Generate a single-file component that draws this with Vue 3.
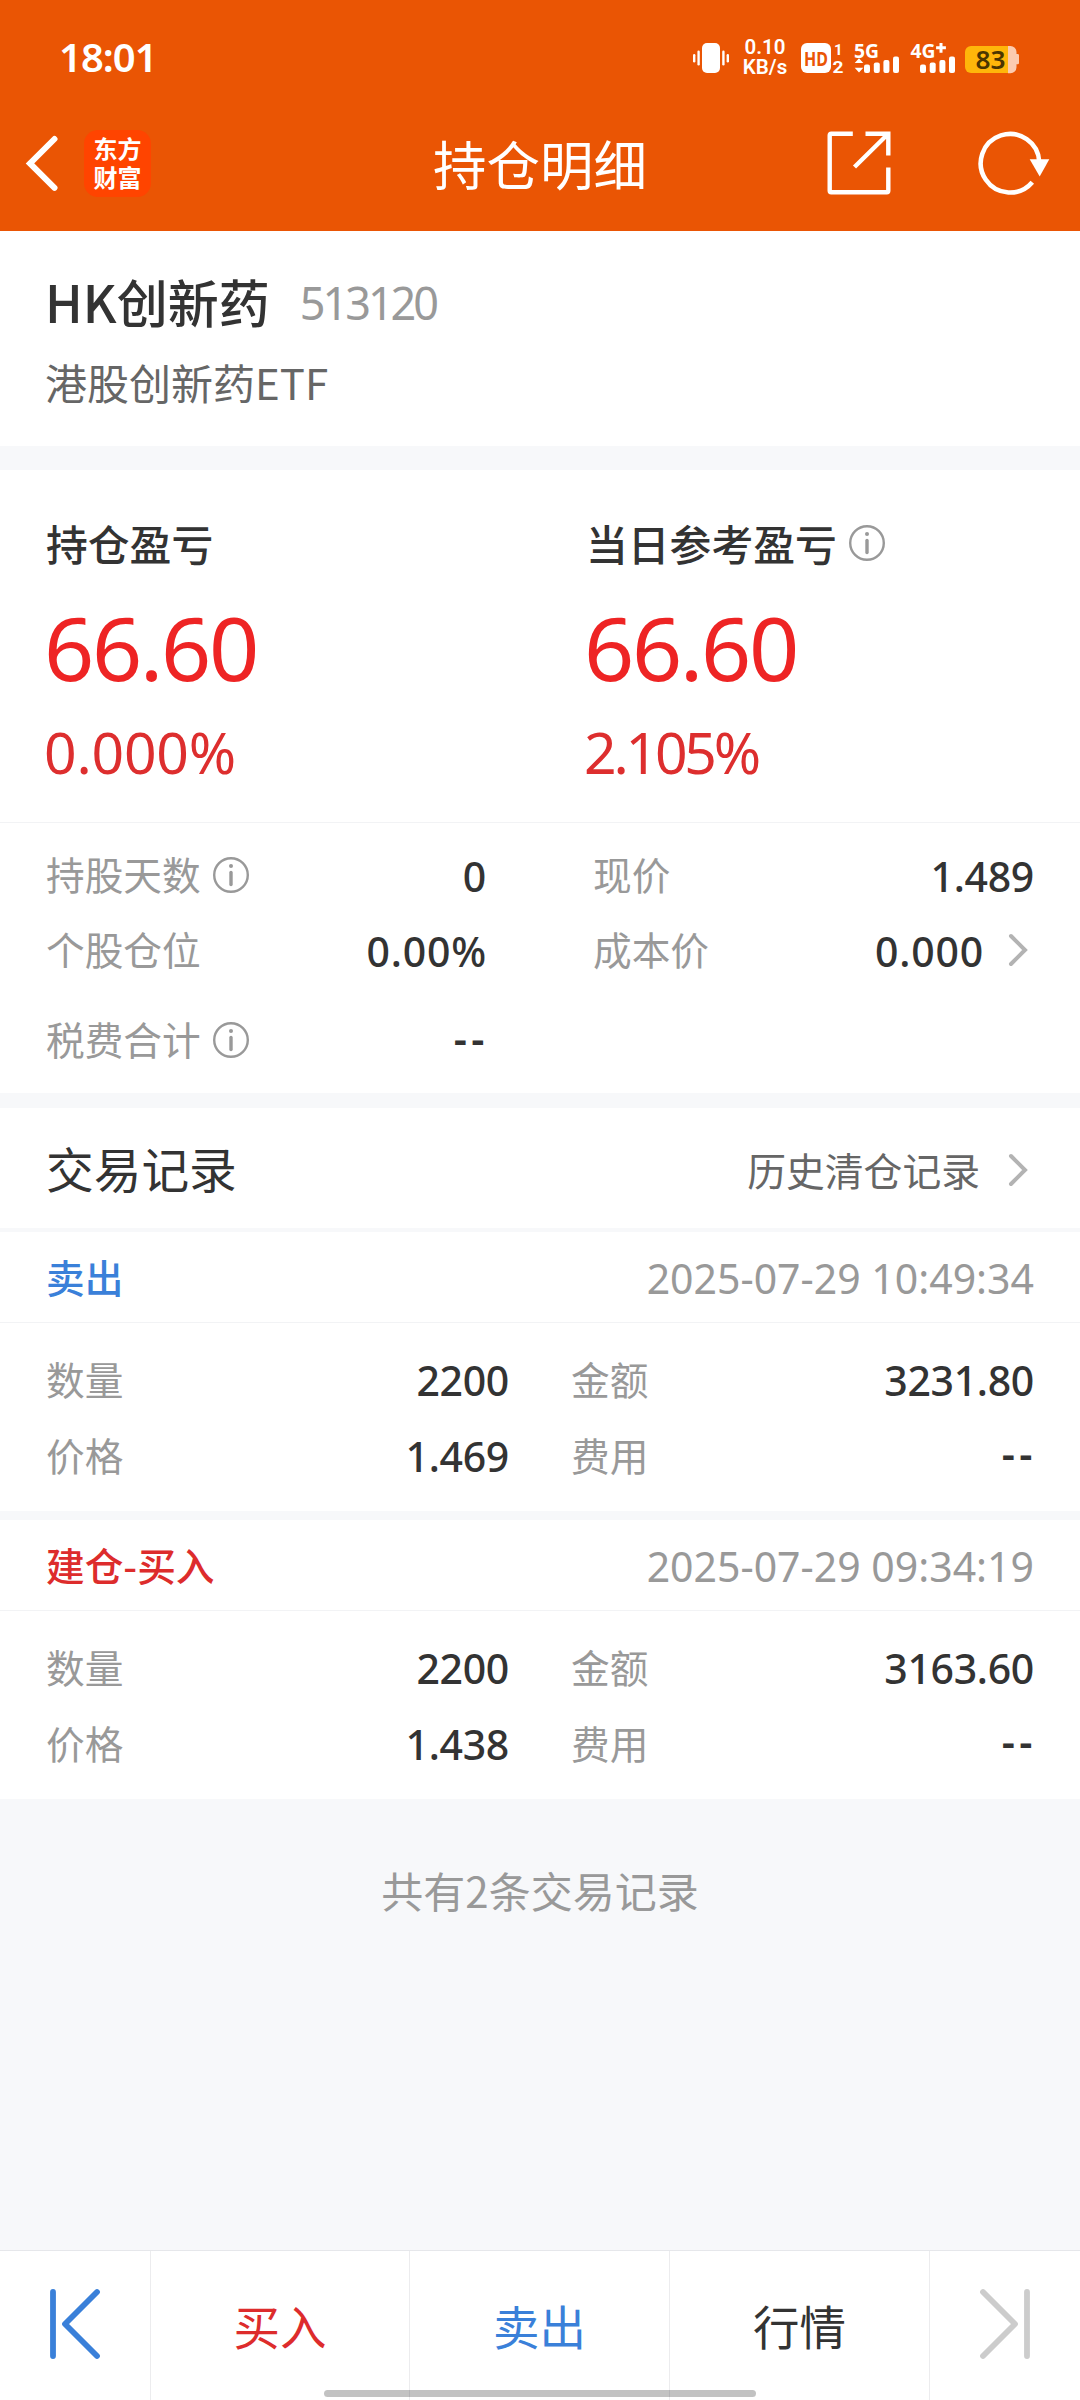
<script setup>
const records = [
  { title: '卖出', type: 'sell', time: '2025-07-29 10:49:34', count: '2200', amount: '3231.80', price: '1.469', fee: '--' },
  { title: '建仓-买入', type: 'buy', time: '2025-07-29 09:34:19', count: '2200', amount: '3163.60', price: '1.438', fee: '--' },
]
</script>

<template>
  <div class="page">
    <header class="header">
      <div class="status">
        <span class="clock">18:01</span>
        <div class="status-icons">
          <!-- vibrate -->
          <svg class="vibrate" width="38" height="44" viewBox="692 36 38 44" fill="#fff">
            <rect x="702" y="43" width="18" height="30" rx="5" />
            <rect x="697.4" y="50.5" width="2.4" height="15" rx="1.2" />
            <rect x="693" y="54" width="2.4" height="8.5" rx="1.2" />
            <rect x="722.2" y="50.5" width="2.4" height="15" rx="1.2" />
            <rect x="726.6" y="54" width="2.4" height="8.5" rx="1.2" />
          </svg>
          <div class="speed"><span>0.10</span><span>KB/s</span></div>
          <!-- HD, dual sim -->
          <svg class="hd" width="44" height="44" viewBox="800 36 44 44" fill="#fff">
            <rect x="801" y="43" width="30" height="30" rx="6" />
            <text class="t" x="804" y="65.5" font-size="20" font-weight="700" textLength="24" lengthAdjust="spacingAndGlyphs" fill="#ea5504">HD</text>
            <text class="s" x="834" y="54.5" font-size="15" font-weight="700">1</text>
            <text class="s" x="832.5" y="72.5" font-size="16" font-weight="700" textLength="11" lengthAdjust="spacingAndGlyphs">2</text>
          </svg>
          <svg class="sig5" width="46" height="44" viewBox="854 36 46 44" fill="#fff">
            <text class="t" x="854" y="57.5" font-size="20" font-weight="700" textLength="25" lengthAdjust="spacingAndGlyphs">5G</text>
            <path d="M859 58.3l4.3 4.6h-8.6zM859 72.6l4.3-4.9h-8.6z" />
            <rect x="864" y="64.5" width="6" height="8.5" rx="2" />
            <rect x="873.8" y="62.6" width="6" height="10.4" rx="2" />
            <rect x="883.4" y="60" width="6" height="13" rx="2" />
            <rect x="893" y="56.5" width="6" height="16.5" rx="2" />
          </svg>
          <svg class="sig4" width="46" height="44" viewBox="911 36 46 44" fill="#fff">
            <text class="t" x="911.5" y="57.5" font-size="20" font-weight="700" textLength="25" lengthAdjust="spacingAndGlyphs">4G</text>
            <path d="M940.5 43h3v3.3h3.4v3h-3.4v3.4h-3v-3.4h-3.4v-3h3.4z" />
            <rect x="921" y="64.5" width="6" height="8.5" rx="2" />
            <rect x="930.7" y="62.6" width="6" height="10.4" rx="2" />
            <rect x="940.4" y="60" width="6" height="13" rx="2" />
            <rect x="950" y="56.5" width="6" height="16.5" rx="2" />
          </svg>
          <!-- battery -->
          <svg class="battery" width="54" height="44" viewBox="966 36 54 44">
            <path d="M1009 46h2.5a6 6 0 0 1 6 6v2h1.2q1.3 0 1.3 1.3v7.7q0 1.3-1.3 1.3h-1.2v3a6 6 0 0 1-6 6h-2.5z" fill="#fccbb0" />
            <path d="M972 46h37v27h-37a6 6 0 0 1-6-6v-15a6 6 0 0 1 6-6z" fill="#ffb60a" />
            <text class="t" x="976.5" y="68.7" font-size="25" font-weight="600" textLength="30" lengthAdjust="spacingAndGlyphs" fill="#4b3500">83</text>
          </svg>
        </div>
      </div>
      <div class="nav">
        <div class="nav-left">
          <svg width="34" height="58" viewBox="0 0 34 58" fill="none" stroke="#fff" stroke-width="6" stroke-linecap="round">
            <path d="M29.5 5L5 29.5l24.500 24.3" />
          </svg>
          <div class="logo"><span>东方</span><span>财富</span></div>
        </div>
        <h1 class="nav-title">持仓明细</h1>
        <div class="nav-right">
          <svg class="share" width="64" height="64" viewBox="0 0 64 64" fill="none" stroke="#fff" stroke-width="4.4">
            <path d="M25.8 2.7H4.2q-1.5 0-1.5 1.5v55.6q0 1.5 1.5 1.5h55.6q1.5 0 1.5-1.5V36.5M38.5 2.7h22.8v21.8M60.5 3.500L27.5 36" />
          </svg>
          <svg class="reload" width="74" height="66" viewBox="0 1 74 66">
            <path d="M55.3 53.3A29.3 29.3 0 1 1 62.300 33" fill="none" stroke="#fff" stroke-width="4.6" />
            <path d="M52.7 30.3H72.3L62.7 47.5z" fill="#fff" />
          </svg>
        </div>
      </div>
    </header>

    <section class="stock">
      <div class="stock-name">HK创新药<span class="num code">513120</span></div>
      <div class="stock-full">港股创新药ETF</div>
    </section>

    <section class="profit">
      <div class="profit-col">
        <div class="profit-label">持仓盈亏</div>
        <div class="num profit-value">66.60</div>
        <div class="num profit-rate">0.000%</div>
      </div>
      <div class="profit-col">
        <div class="profit-label">当日参考盈亏
          <svg class="info" viewBox="0 0 36 36"><circle cx="18" cy="18" r="16.8" /><path d="M18 15.5v12" /><circle class="dot" cx="18" cy="9" r="2" /></svg>
        </div>
        <div class="num profit-value">66.60</div>
        <div class="num profit-rate tight">2.105%</div>
      </div>
    </section>

    <section class="detail">
      <div class="cell">
        <span class="label">持股天数</span>
        <svg class="info" viewBox="0 0 36 36"><circle cx="18" cy="18" r="16.8" /><path d="M18 15.5v12" /><circle class="dot" cx="18" cy="9" r="2" /></svg>
        <span class="num value">0</span>
      </div>
      <div class="cell">
        <span class="label">现价</span>
        <span class="num value">1.489</span>
      </div>
      <div class="cell">
        <span class="label">个股仓位</span>
        <span class="num value wide">0.00%</span>
      </div>
      <div class="cell">
        <span class="label">成本价</span>
        <span class="num value wide">0.000</span>
        <svg class="arrow" viewBox="0 0 20 34"><path d="M3 3l14 14L3 31" /></svg>
      </div>
      <div class="cell last">
        <span class="label">税费合计</span>
        <svg class="info" viewBox="0 0 36 36"><circle cx="18" cy="18" r="16.8" /><path d="M18 15.5v12" /><circle class="dot" cx="18" cy="9" r="2" /></svg>
        <span class="num value dash">--</span>
      </div>
    </section>

    <section class="records-head">
      <span class="records-title">交易记录</span>
      <span class="history">历史清仓记录</span>
      <svg class="arrow" viewBox="0 0 20 34"><path d="M3 3l14 14L3 31" /></svg>
    </section>

    <section v-for="item in records" :key="item.time" class="record">
      <div class="record-head">
        <span :class="['record-type', item.type]">{{ item.title }}</span>
        <span class="num time">{{ item.time }}</span>
      </div>
      <div class="record-body">
        <div class="cell"><span class="label">数量</span><span class="num value">{{ item.count }}</span></div>
        <div class="cell"><span class="label">金额</span><span class="num value">{{ item.amount }}</span></div>
        <div class="cell"><span class="label">价格</span><span class="num value">{{ item.price }}</span></div>
        <div class="cell"><span class="label">费用</span><span class="num value dash">{{ item.fee }}</span></div>
      </div>
    </section>

    <div class="total">共有2条交易记录</div>

    <footer class="footer">
      <div class="tab">
        <svg width="52" height="72" viewBox="0 0 52 72" fill="none" stroke="#3a80d9" stroke-width="5.8" stroke-linecap="round" stroke-linejoin="round">
          <path d="M4 4v64M48 4L16 36l32 32" />
        </svg>
      </div>
      <div class="tab buy">买入</div>
      <div class="tab sell">卖出</div>
      <div class="tab">行情</div>
      <div class="tab">
        <svg width="52" height="72" viewBox="0 0 52 72" fill="none" stroke="#ccc" stroke-width="5.8" stroke-linecap="round" stroke-linejoin="round">
          <path d="M48 4v64M4 4l32 32L4 68" />
        </svg>
      </div>
      <div class="home-bar"></div>
    </footer>
  </div>
</template>

<style>
body {
  background: #f7f8fa;
}
</style>

<style scoped>
.page {
  display: flex;
  flex-direction: column;
  width: 1080px;
  height: 2400px;
  background: #f7f8fa;
  color: #333;
  font-family: "Noto Sans CJK SC", sans-serif;
  overflow: hidden;
}

.num,
.t,
.clock {
  font-family: "Noto Sans", sans-serif;
}

.s,
.speed {
  font-family: Roboto, sans-serif;
}

/* header */
.header {
  height: 231px;
  background: #ea5504;
  color: #fff;
}

.status {
  display: flex;
  justify-content: space-between;
  align-items: center;
  height: 116px;
  padding: 0 61px 0 59px;
}

.clock {
  padding-bottom: 3px;
  font-size: 40px;
  font-weight: 600;
  letter-spacing: -1px;
}

.status-icons {
  display: flex;
  align-items: center;
}

.speed {
  display: flex;
  flex-direction: column;
  align-items: center;
  width: 48px;
  margin: 0 11px 2px 11px;
  font-size: 20.5px;
  font-weight: 600;
  line-height: 20px;
}

.hd,
.sig5 {
  margin-right: 10px;
}

.sig4 {
  margin-right: 9px;
}

.nav {
  display: grid;
  grid-template-columns: 1fr auto 1fr;
  align-items: center;
  height: 94px;
  padding: 0 29px 0 25px;
}

.nav-left,
.nav-right {
  display: flex;
  align-items: center;
}

.nav-right {
  justify-content: flex-end;
}

.logo {
  display: flex;
  flex-direction: column;
  align-items: center;
  justify-content: center;
  width: 67px;
  height: 67px;
  margin-left: 25px;
  padding-bottom: 2px;
  box-sizing: border-box;
  border-radius: 14px;
  background: #ff4400;
  font-size: 24px;
  font-weight: 700;
  line-height: 29px;
}

.nav-title {
  margin: 0 0 0 4px;
  font-size: 53.5px;
  font-weight: 400;
  line-height: 80px;
}

.share {
  margin-right: 86px;
}

/* name */
.stock {
  height: 215px;
  padding: 30px 46px 0 45px;
  box-sizing: border-box;
  background: #fff;
}

.stock-name {
  display: flex;
  align-items: center;
  font-size: 51px;
  font-weight: 500;
  line-height: 80px;
}

.code {
  margin: 3px 0 0 30px;
  color: #999;
  font-size: 45px;
  font-weight: 400;
  line-height: 77px;
  letter-spacing: -3px;
}

.stock-full {
  margin-top: 9px;
  color: #666;
  font-size: 42px;
  line-height: 64px;
}

/* profit */
.profit {
  display: grid;
  grid-template-columns: 540px 1fr;
  height: 352px;
  margin-top: 24px;
  padding: 42px 0 0 46px;
  box-sizing: border-box;
  background: #fff;
}

.profit-label {
  display: flex;
  align-items: center;
  font-size: 41.8px;
  font-weight: 500;
  line-height: 62px;
}

.profit-value {
  margin: 23px 0 0 -2px;
  color: #ee2424;
  font-size: 88px;
  line-height: 100px;
  letter-spacing: -2.4px;
}

.profit-rate {
  margin: 20px 0 0 -2px;
  color: #dd2e2e;
  font-size: 57px;
  line-height: 70px;
  letter-spacing: -0.2px;
}

.tight {
  letter-spacing: -3.2px;
}

.info {
  width: 36px;
  height: 36px;
  margin-left: 12px;
  fill: none;
  stroke: #999;
  stroke-width: 2.4;
  stroke-linecap: round;
}

.info path {
  stroke-width: 3.4;
}

.info .dot {
  fill: #999;
  stroke: none;
}

/* detail */
.detail {
  display: grid;
  grid-template-columns: 440px 441px;
  grid-template-rows: 75px 75px 75px;
  column-gap: 107px;
  height: 271px;
  padding: 14px 46px 0;
  box-sizing: border-box;
  border-top: 1px solid #f2f3f5;
  background: #fff;
}

.cell {
  display: flex;
  align-items: center;
}

.last {
  margin-top: 15px;
  margin-bottom: -15px;
}

.label {
  padding-bottom: 3px;
  color: #999;
  font-size: 38.7px;
  line-height: 60px;
}

.value {
  margin-left: auto;
  padding-top: 2px;
  font-size: 41px;
  font-weight: 500;
  line-height: 60px;
  letter-spacing: -0.3px;
}

.wide {
  margin-right: -1px;
  letter-spacing: 0.8px;
}

.dash {
  margin-right: -3px;
  padding: 0 0 4px;
  font-weight: 600;
  letter-spacing: 4.5px;
}

.arrow {
  width: 20px;
  height: 34px;
  margin: 0 6px 0 25px;
  fill: none;
  stroke: #b3b3b3;
  stroke-width: 4;
  stroke-linecap: round;
}

/* records */
.records-head {
  display: flex;
  align-items: center;
  height: 120px;
  margin-top: 15px;
  padding: 0 46px;
  background: #fff;
}

.records-head .arrow {
  margin: 4px 6px 0 28px;
}

.records-title {
  padding-bottom: 2px;
  font-size: 47.7px;
  font-weight: 400;
}

.history {
  margin-left: auto;
  padding-top: 1px;
  color: #666;
  font-size: 38.8px;
}

.record {
  height: 279px;
  margin-top: 4px;
  background: #fff;
}

.record + .record {
  margin-top: 9px;
}

.record-head {
  display: flex;
  justify-content: space-between;
  align-items: center;
  height: 90px;
  padding: 0 46px;
  border-bottom: 1px solid #f2f3f5;
}

.record-type {
  padding-bottom: 2px;
  font-size: 38.7px;
  font-weight: 500;
}

.buy {
  color: #dd2c2c;
}

.sell {
  color: #3a80d9;
}

.time {
  padding-top: 2px;
  color: #999;
  font-size: 41px;
}

.record-body {
  display: grid;
  grid-template-columns: 463px 463px;
  grid-template-rows: 76px 76px;
  column-gap: 62px;
  padding: 18px 46px 0;
}

.total {
  margin-top: 59px;
  color: #999;
  font-size: 42px;
  line-height: 64px;
  text-align: center;
}

/* footer */
.footer {
  position: relative;
  display: grid;
  grid-template-columns: 151px 259px 260px 260px 150px;
  height: 150px;
  margin-top: auto;
  box-sizing: border-box;
  border-top: 1px solid #e6e7eb;
  background: #fff;
}

.tab {
  display: flex;
  justify-content: center;
  align-items: center;
  padding-bottom: 3px;
  border-right: 1px solid #ececee;
  font-size: 46.5px;
}

.tab:nth-child(5) {
  border-right: none;
}

.home-bar {
  position: absolute;
  left: 324px;
  bottom: 3px;
  width: 432px;
  height: 7px;
  border-radius: 4px;
  background: rgba(0, 0, 0, 0.24);
}
</style>
